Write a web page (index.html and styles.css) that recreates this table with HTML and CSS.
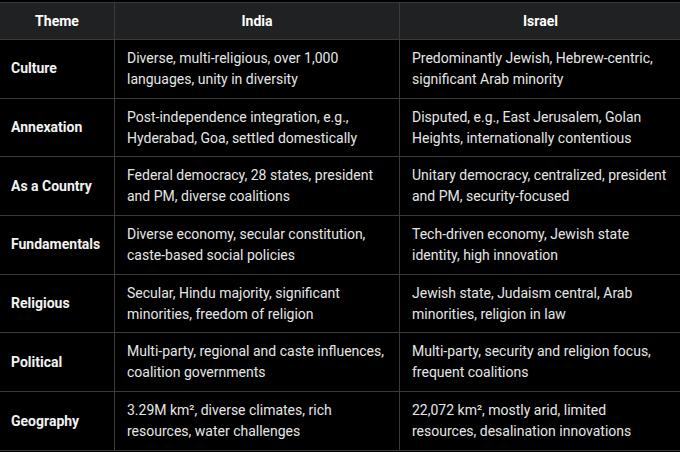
FILE: index.html
```html
<!DOCTYPE html>
<html lang="en">
<head>
<meta charset="utf-8">
<title>India vs Israel</title>
<link rel="stylesheet" href="styles.css">
</head>
<body>
<table class="cmp">
  <colgroup>
    <col class="c-theme">
    <col class="c-india">
    <col class="c-israel">
  </colgroup>
  <thead>
    <tr><th>Theme</th><th>India</th><th>Israel</th></tr>
  </thead>
  <tbody>
    <tr><th>Culture</th><td>Diverse, multi-religious, over 1,000 languages, unity in diversity</td><td>Predominantly Jewish, Hebrew-centric, significant Arab minority</td></tr>
    <tr><th>Annexation</th><td>Post-independence integration, e.g., Hyderabad, Goa, settled domestically</td><td>Disputed, e.g., East Jerusalem, Golan Heights, internationally contentious</td></tr>
    <tr><th>As a Country</th><td>Federal democracy, 28 states, president and PM, diverse coalitions</td><td>Unitary democracy, centralized, president and PM, security-focused</td></tr>
    <tr><th>Fundamentals</th><td>Diverse economy, secular constitution, caste-based social policies</td><td>Tech-driven economy, Jewish state identity, high innovation</td></tr>
    <tr><th>Religious</th><td>Secular, Hindu majority, significant minorities, freedom of religion</td><td>Jewish state, Judaism central, Arab minorities, religion in law</td></tr>
    <tr><th>Political</th><td>Multi-party, regional and caste influences, coalition governments</td><td>Multi-party, security and religion focus, frequent coalitions</td></tr>
    <tr><th>Geography</th><td>3.29M km², diverse climates, rich resources, water challenges</td><td>22,072 km², mostly arid, limited resources, desalination innovations</td></tr>
  </tbody>
</table>
</body>
</html>
```
FILE: styles.css
```css
html, body {
  margin: 0;
  padding: 0;
  background: #000;
  overflow: hidden;
}
body {
  font-family: Roboto, "Noto Sans", sans-serif;
  font-size: 14px;
  color: #e6e6e6;
  padding-top: 2px;
}
.cmp {
  border-collapse: collapse;
  width: 682px;
  margin-left: -1px;
  table-layout: fixed;
}
.c-theme { width: 115px; }
.c-india { width: 285px; }
.c-israel { width: 282px; }
.cmp th, .cmp td {
  border: 1px solid #3a3a3a;
  text-align: left;
  vertical-align: middle;
}
.cmp thead th {
  background: #202123;
  color: #fff;
  font-weight: 700;
  text-align: center;
  height: 36px;
  padding: 0 12px;
  line-height: 20px;
}
.cmp tbody th {
  font-weight: 700;
  color: #f2f2f2;
  padding: 8px 11px;
  line-height: 20.85px;
}
.cmp tbody td {
  padding: 8px 12px;
  line-height: 20.85px;
}
```
